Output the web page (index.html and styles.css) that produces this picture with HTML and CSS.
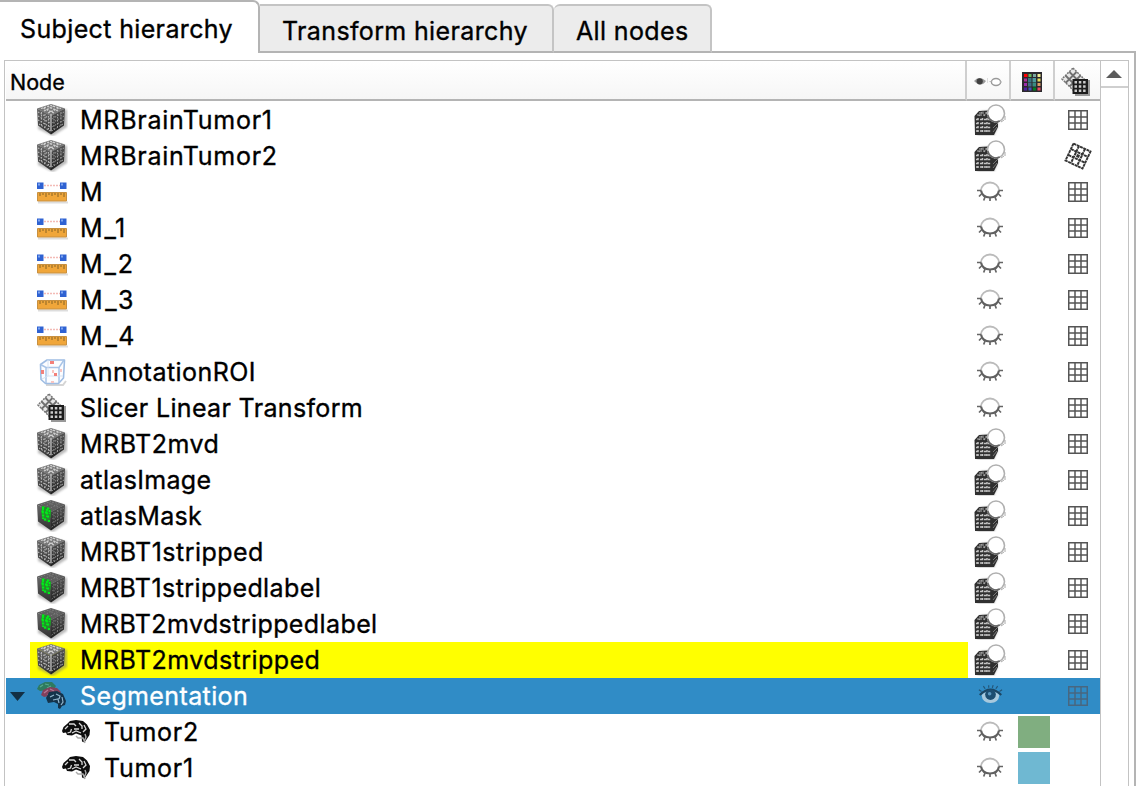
FILE: index.html
```html
<!DOCTYPE html>
<html lang="en">
<head>
<meta charset="utf-8">
<title>Subject hierarchy</title>
<link rel="stylesheet" href="styles.css">
</head>
<body>
<svg class="defs" aria-hidden="true">
  <defs>
    <filter id="soft" x="-20%" y="-20%" width="140%" height="140%"><feGaussianBlur stdDeviation="1.1"/></filter>
    <linearGradient id="left" x2="0" y2="1"><stop stop-color="#686868"/><stop offset="1" stop-color="#303030"/></linearGradient>
    <linearGradient id="right" x2="0" y2="1"><stop stop-color="#555"/><stop offset="1" stop-color="#202020"/></linearGradient>
    <symbol id="cube" viewBox="0 0 32 32">
      <path d="M3 7 17 2l14 4v17L17 32 2 25z" fill="#777" opacity=".5" filter="url(#soft)"/>
      <path d="M1 4.500 15 0l14 4.500L15 12z" fill="#777"/>
      <path d="M1 4.500 15 12v18.500L2 21.500z" fill="url(#left)"/>
      <path d="M29 4.500 15 12v18.500L28 21.500z" fill="url(#right)"/>
      <path d="M5 4.500 15 1.500l10 3M8 7l10-5M12 9l11-5M22 7 11 2M18 9 7 4" stroke="#d0d0d0" stroke-width="1.300" fill="none" stroke-dasharray="2 1.200"/>
      <path d="M2 8l13 7.500M2 12l13 7.500M2 16l13 7.500M3 20l12 7.500M5.500 8v15M9 10v15M12.500 12v15" stroke="#b5b5b5" stroke-width="1.100" fill="none" stroke-dasharray="1.500 1.500"/>
      <path d="M28 8l-13 7.500M28 12l-13 7.500M28 16l-13 7.500M27 20l-12 7.500M25 8v15M21.500 10v15M18 12v15" stroke="#a0a0a0" stroke-width="1" fill="none" stroke-dasharray="1.500 1.500"/>
      <path d="M15 10v17" stroke="#ccc" stroke-width="1.200"/>
    </symbol>
    <symbol id="label" viewBox="0 0 32 32">
      <path d="M3 7 17 2l14 4v17L17 32 2 25z" fill="#777" opacity=".5" filter="url(#soft)"/>
      <path d="M1 4.500 15 0l14 4.500L15 12z" fill="#5e5e5e"/>
      <path d="M1 4.500 15 12v18.500L2 21.500z" fill="url(#left)"/>
      <path d="M29 4.500 15 12v18.500L28 21.500z" fill="url(#right)"/>
      <path d="M5 4.500 15 1.500l10 3M8 7l10-5M12 9l11-5M22 7 11 2M28 8l-13 7.500M28 12l-13 7.500M28 16l-13 7.500M27 20l-12 7.500M25 8v15M21.500 10v15M18 12v15" stroke="#808080" stroke-width=".9" fill="none" stroke-dasharray="1.500 1.500"/>
      <path d="M6 6l4 1 5 2.500v7l-1 2-1 4-5-2-2-3-1-5z" fill="#258b2d"/>
      <path d="M6 7.500h3M11 8.500h3M5.500 11.500h2M9 12.500h3M6 15.500h3M11 16.500h2M8 19.500h2M12 21h2M7 8v11M11 9v8M13.500 10v4" stroke="#00ef18" stroke-width="1.800" fill="none" stroke-dasharray="2.200 1"/>
    </symbol>
    <symbol id="ruler" viewBox="0 0 32 32">
      <path d="M2 25.500h30v2H2z" fill="#ddd"/>
      <path d="M1.500 16.500h29v8.500h-29z" fill="#f0a63a" stroke="#c89040"/>
      <path d="M4 17v3M7 17v2M10 17v4M13 17v2M16 17v3M19 17v2M22 17v4M25 17v2M28 17v4" stroke="#9a7028" stroke-width="1.200"/>
      <path d="M8 9.500h16" stroke="#f3bbb6" stroke-width="1.500" stroke-dasharray="2 1"/>
      <path d="M1 6.500h6.500v6.500H1zM24 6.500h6.500v6.500H24z" fill="#2f62d2"/>
      <path d="M2 7.500h2v2H2zM25 7.500h2v2h-2z" fill="#7fa5f0"/>
    </symbol>
    <symbol id="roi" viewBox="0 0 32 32">
      <path d="M10 29h17l3-4" stroke="#d5d5d5" stroke-width="2" fill="none"/>
      <path d="M4.500 8.500 11 4h17.500l-1 18-5 5.500H9.500L5 23.500z" fill="#fcfdff" stroke="#9fbde3" stroke-width="1.600" stroke-linejoin="round"/>
      <path d="M4.500 8.500 10 11.500h13l5-7.500M10 11.500V27M23 11.500V27" fill="none" stroke="#a8c4e7" stroke-width="1.500"/>
      <path d="M12 4v16h15M12 20l-6 3" fill="none" stroke="#d6e2f2"/>
      <path d="M14 5h4v3h-4zM5 14h3v4H5zM18 17h3v3h-3z" fill="#f3807a"/>
      <path d="M24 13h2v3h-2zM15 25h3v2h-3zM16 14h2v3h-2z" fill="#f9c5c1"/>
    </symbol>
    <symbol id="transform" viewBox="0 0 32 32">
      <path d="M13 2 24 13 13 24 2 13z" fill="#e8e8e8" stroke="#777" stroke-width="1.500" stroke-dasharray="2 1"/>
      <path d="M9.500 6l11 11M5.500 9.500l11 11M16.500 6 5.500 17M20.500 9.500l-11 11" stroke="#707070" stroke-width="1.800"/>
      <path d="M27 14h3v16H15v-3h12z" fill="#999"/>
      <path d="M12.500 13H28v15H12.500z" fill="#1c1c1c"/>
      <path d="M14.500 15h2.500v2.500h-2.500zm4.300 0h2.500v2.500h-2.500zm4.300 0h2.500v2.500h-2.500zM14.500 19.200h2.500v2.500h-2.500zm4.300 0h2.500v2.500h-2.500zm4.300 0h2.500v2.500h-2.500zM14.500 23.500h2.500V26h-2.500zm4.300 0h2.500V26h-2.500zm4.300 0h2.500V26h-2.500z" fill="#ccc"/>
    </symbol>
    <symbol id="brain" viewBox="0 0 32 32">
      <path d="M2 15 3.500 11 7 8l3-3 6-1 7 1 4 3.500 3 5.500-.5 5-2 3-3 4.500-2.500-1-.5-6-5.500-2-4 2-5-.5-1-2.500-3 .5z" fill="#0d0d0d"/>
      <path d="M5 13l3-3M7.500 17l3-1 1-3M9 8h5l2 2M14 13h5M12 17l4-2 5 2M19 7l3 3v3M24 9l2 4-3 3" fill="none" stroke="#d8d8d8" stroke-width="1.300"/>
      <path d="M16 20l2 2h5l2 5M25 18l1 3-2 5" fill="none" stroke="#aaa" stroke-width="1.400"/>
    </symbol>
    <symbol id="seg" viewBox="0 0 32 32">
      <path d="M1 9 3 5l6-3h7l4 4-3 5-6-1-7 1z" fill="#2d7b60"/>
      <path d="M4 7l3-2M9 4l4 1M11 8l4-2" stroke="#58a98c" stroke-width="1.200"/>
      <path d="M5 15 7 10l7-3 7 1 4 4-4 5-8-1-5 1z" fill="#82405d"/>
      <path d="M8 13l4-3M14 9l4 2M11 15l5-1" stroke="#b47896" stroke-width="1.200"/>
      <path d="M10 18 13 12l8-1 6 3 3 7-1 4-3 1-2 3-2-1v-4l-4-2-6 1z" fill="#14334b"/>
      <path d="M14 17l4-2M20 14l4 2-1 3M17 20l5-1 1 4M26 17l1 5-2 3" fill="none" stroke="#91b5cd" stroke-width="1.200"/>
    </symbol>
    <symbol id="volvis" viewBox="0 0 32 32">
      <path d="M3 12 7 7l18-1-1 17-4 9H3z" fill="#888" opacity=".45" filter="url(#soft)"/>
      <path d="M.5 12 5 7l18-1 1 1v16l-4 8H1z" fill="#303030"/>
      <path d="M5 9h7M3 11h9M5 12l4-5M10 12l4-5" stroke="#aaa" stroke-width="1.200" stroke-dasharray="2 1"/>
      <path d="M2 15.500h15M2 19.500h15M2 23.500h15M2 27h15M4 14v14M8.500 14v14M13 14v14" stroke="#c4c4c4" stroke-width="1.500" stroke-dasharray="2.200 1.800"/>
      <path d="M20 19l4-4M19 24l5-5M19 28l4-5" stroke="#777" stroke-width="1"/>
      <circle cx="22" cy="9.500" r="8.500" fill="#fff" stroke="#b0b0b0" stroke-width="1.600"/>
      <path d="M13.700 11a8.500 8.500 0 0 0 12 6" fill="none" stroke="#666" stroke-width="1.500"/>
      <path d="M31 12v4M27 18l3-2" stroke="#aaa"/>
    </symbol>
    <symbol id="closed" viewBox="0 0 28 22">
      <path d="M5 9.500a9 8 0 0 1 18 0" fill="none" stroke="#bbb" stroke-width="1.800"/>
      <path d="M5 9.500c1 5.500 5 7 9 7s8-1.500 9-7" fill="none" stroke="#606060" stroke-width="2.100"/>
      <path d="M1 9.500h4M23 9.500h4M5.500 13l-2.500 2.500M9 16l-1.300 3.500M14 16.500V20M19 16l1.300 3.500M22.500 13l2.500 2.500" stroke="#666" stroke-width="1.700"/>
    </symbol>
    <symbol id="open" viewBox="0 0 28 22">
      <path d="M4 11q10-10 20 0-1 9-10 9T4 11z" fill="#a8c9dd"/>
      <path d="M2 11Q14-1 26 11" fill="none" stroke="#1c4663" stroke-width="2.500"/>
      <path d="M4 7 1 5M8 4 6 1M12 3V0M16 3l1-3M20 4l2-3M24 7l3-2" stroke="#245577" stroke-width="1.300"/>
      <circle cx="14" cy="10.500" r="6" fill="#1c4d70"/><circle cx="13" cy="9.500" r="2" fill="#5795bd"/>
    </symbol>
    <symbol id="grid" viewBox="0 0 20 20">
      <path d="M.75.75h18.500v18.500H.75zM7 1v18M13 1v18M1 7h18M1 13h18" fill="none" stroke="currentColor" stroke-width="1.500"/>
    </symbol>
    <symbol id="warp" viewBox="0 0 28 28">
      <path d="M9.500 1.500 26.500 9.500 18.500 26.500 1.500 18.500zM7 7l17 8M4.500 13l17 8M15 4 7 21M21 7l-8 17" fill="none" stroke="#333" stroke-width="1.900" stroke-dasharray="3 .6"/>
      <path d="M13 12l3 1-1 3-3-1z" fill="#333"/>
    </symbol>
    <symbol id="eyes" viewBox="0 0 28 12">
      <path d="M0 5q5-6 12 0-5 7-12 0z" fill="#999"/><circle cx="5.700" cy="5.300" r="3.100" fill="#404040"/>
      <path d="M13.500 2v5" stroke="#ddd"/>
      <ellipse cx="22" cy="6" rx="4.600" ry="3.500" fill="#fff" stroke="#999" stroke-width="1.400"/>
      <path d="M15.500 5.500h2M26 6h2" stroke="#bbb"/>
    </symbol>
    <symbol id="palette" viewBox="0 0 20 20">
      <path d="M0 0h20v20H0z" fill="#2b292d"/>
      <path d="M2 2h3.500v3H2z" fill="#f00"/><path d="M6.500 2h3v3h-3z" fill="#65b956"/><path d="M11 2h3v3h-3z" fill="#79a7a0"/><path d="M15.500 2h3v3h-3z" fill="#f2ed92"/>
      <path d="M2 6.500h3v3H2z" fill="#ae319b"/><path d="M6 6h3.500v4H6z" fill="#397780"/><path d="M10.500 6h3.500v4h-3.500z" fill="#4d9b9d"/><path d="M15.500 6.500h3v3h-3z" fill="#e6df5d"/>
      <path d="M2 11h3v3H2z" fill="#9b2daa"/><path d="M6 10.500h3.500v4H6z" fill="#3e6f84"/><path d="M10.500 10.500h3.500v4h-3.500z" fill="#398c83"/><path d="M15.500 11h3v3h-3z" fill="#dd9b65"/>
      <path d="M2 15.500h3v3H2z" fill="#4d20a0"/><path d="M6.500 15.500h3v3h-3z" fill="#4554bc"/><path d="M11 15.500h3v3h-3z" fill="#008020"/><path d="M15.500 15.500h3v3h-3z" fill="#ed4b65"/>
    </symbol>
  </defs>
</svg>
<div class="window">
  <nav class="tabs">
    <div class="tab active"><span class="t-subject">Subject hierarchy</span></div>
    <div class="tab second"><span class="t-transform">Transform hierarchy</span></div>
    <div class="tab third"><span class="t-all">All nodes</span></div>
    <div class="rest"></div>
  </nav>
  <main class="pane">
    <div class="tree">
      <div class="table">
        <header class="head">
          <div class="h name-head">Node</div>
          <div class="h"><svg class="i-eyes"><use href="#eyes"/></svg></div>
          <div class="h"><svg class="i-pal"><use href="#palette"/></svg></div>
          <div class="h last"><svg class="i32"><use href="#transform"/></svg></div>
        </header>
        <div class="rows" id="rows"></div>
      </div>
      <aside class="scroll"><div class="up"><svg viewBox="0 0 16 8"><path d="M0 8 8 0l8 8z"/></svg></div></aside>
    </div>
  </main>
</div>
<script src="tree.js"></script>
</body>
</html>
```
FILE: styles.css
```css
* { box-sizing: border-box; }
body { margin: 0; background: #fff; color: #000; font-family: Inter, "Liberation Sans", sans-serif; overflow: hidden; -webkit-text-stroke: .35px currentColor; }
svg { display: block; flex: none; }
.defs { position: absolute; width: 0; height: 0; }
.window { width: 1136px; height: 786px; display: flex; flex-direction: column; overflow: hidden; }
.tabs { display: flex; height: 53px; flex: none; align-items: flex-end; font-size: 25px; white-space: nowrap; }
.tab { display: flex; align-items: center; height: 49px; background: #ececec; border: 2px solid #c4c4c4; border-bottom-color: #b4b4b4; border-radius: 6px 6px 0 0; }
.tab.active { width: 260px; height: 53px; background: #fff; border: solid #b4b4b4; border-width: 2px 2px 0 0; border-radius: 0 7px 0 0; padding: 3px 0 0 20px; }
.second { width: 294px; border-left: 0; border-top-left-radius: 0; padding: 4px 0 0 22px; }
.third { width: 158px; border-left: 0; padding: 4px 0 0 22px; }
.rest { flex: 1; height: 2px; background: #b4b4b4; }
.t-subject, .t-transform, .t-all { letter-spacing: .36px; }
.pane { flex: 1; min-height: 0; border-right: 2px solid #b4b4b4; padding: 7px 5px 0 4px; display: flex; }
.tree { flex: 1; display: flex; border: solid #c3c3c3; border-width: 1px 1px 0 1px; }
.table { width: 1095px; padding-left: 1px; }
.head { height: 40px; display: grid; grid-template-columns: 961px 44px 44px 45px; }
.h { display: flex; align-items: center; justify-content: center; padding-top: 4px; border-bottom: 2px solid #b4b4b4; border-right: 2px solid #cfcfcf; background: linear-gradient(#fff, #f6f6f6); }
.h.last { border-right: 0; padding-right: 3px; }
.name-head { justify-content: flex-start; padding-left: 4px; font-size: 21.5px; }
.i-eyes { width: 28px; height: 12px; filter: blur(.4px); }
.i-pal { width: 20px; height: 20px; }
.i32 { width: 32px; height: 32px; filter: blur(.4px); }
.rows { padding-top: 1px; }
.row { height: 36px; display: grid; grid-template-columns: 962px 44px 44px 44px; font-size: 25px; }
.name { display: flex; align-items: center; margin-left: 24px; padding-left: 6px; white-space: nowrap; }
.name svg { margin-right: 12px; }
.child .name { padding-left: 30px; }
.cell { display: flex; align-items: center; justify-content: center; }
.marked .name { background: #ff0; }
.selected { background: #308cc6; color: #fff; }
.selected .name { margin-left: 0; padding-left: 4px; }
.selected .arrow { width: 15px; height: 9px; margin-right: 11px; fill: #122f44; }
.i-eye { width: 28px; height: 22px; margin-right: 1px; filter: blur(.35px); }
.i-open { width: 25px; height: 20px; margin-bottom: 2px; filter: blur(.5px); }
.i-grid { width: 20px; height: 20px; color: #555; }
.i-warp { width: 28px; height: 28px; filter: blur(.25px); }
.selected .i-grid { color: #486780; }
.swatch { width: 32px; height: 32px; }
.green { background: #80ae80; }
.blue { background: #6fb8d2; }
.scroll { flex: 1; border-left: 1px solid #c3c3c3; }
.up { height: 27px; border-bottom: 2px solid #cfcfcf; display: flex; justify-content: center; padding: 9px 1px 0 0; }
.up svg { width: 16px; height: 8px; fill: #5c5c5c; }
```
FILE: tree.js
```js
// name, type icon, visibility icon, transform icon, letter spacing, row state, colour
const nodes = [
  ["MRBrainTumor1", "cube", "volvis", "grid", .74],
  ["MRBrainTumor2", "cube", "volvis", "grid-warp", .74],
  ["M", "ruler", "closed", "grid", 0],
  ["M_1", "ruler", "closed", "grid", 1.9],
  ["M_2", "ruler", "closed", "grid", 1.9],
  ["M_3", "ruler", "closed", "grid", 2.6],
  ["M_4", "ruler", "closed", "grid", 2.8],
  ["AnnotationROI", "roi", "closed", "grid", .46],
  ["Slicer Linear Transform", "transform", "closed", "grid", .35],
  ["MRBT2mvd", "cube", "volvis", "grid", .5],
  ["atlasImage", "cube", "volvis", "grid", .33],
  ["atlasMask", "label", "volvis", "grid", .35],
  ["MRBT1stripped", "cube", "volvis", "grid", .48],
  ["MRBT1strippedlabel", "label", "volvis", "grid", .42],
  ["MRBT2mvdstrippedlabel", "label", "volvis", "grid", .4],
  ["MRBT2mvdstripped", "cube", "volvis", "grid", .44],
  ["Segmentation", "seg", "open", "grid", .38],
  ["Tumor2", "brain", "closed", "", .7, "child", "green"],
  ["Tumor1", "brain", "closed", "", .7, "child", "blue"]
];
nodes[1][3] = "warp";
nodes[15][5] = "marked";
nodes[16][5] = "selected";
const icon = (id, cls) => `<svg class="${cls}"><use href="#${id}"/></svg>`;
const sizes = { volvis: "i32", closed: "i-eye", open: "i-open", grid: "i-grid", warp: "i-warp" };
document.getElementById("rows").innerHTML = nodes.map(([name, type, eye, grid, space, state = "", color]) => `
  <div class="row ${state}">
    <div class="name">${state === "selected" ? '<svg class="arrow" viewBox="0 0 15 9"><path d="M0 0h15L7.500 9z"/></svg>' : ""}${icon(type, "i32")}<span style="letter-spacing:${space}px">${name}</span></div>
    <div class="cell">${icon(eye, sizes[eye])}</div>
    <div class="cell">${color ? `<div class="swatch ${color}"></div>` : ""}</div>
    <div class="cell">${grid ? icon(grid, sizes[grid]) : ""}</div>
  </div>`).join("");
```
